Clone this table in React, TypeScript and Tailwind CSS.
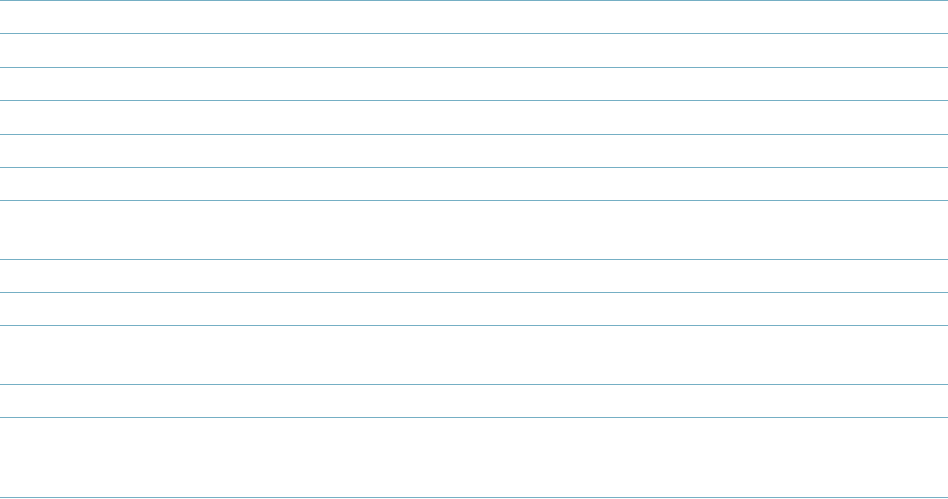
const rows = [
  'h-[33.4px]',
  'h-[33.4px]',
  'h-[33.4px]',
  'h-[33.4px]',
  'h-[33.4px]',
  'h-[33.4px]',
  'h-[58.3px]',
  'h-[33.4px]',
  'h-[33.4px]',
  'h-[58.3px]',
  'h-[33.4px]',
  'h-[80.3px]',
];

export default function App() {
  return (
    <div className="w-[948px] h-[499px] bg-white overflow-hidden" style={{ fontFamily: '"Liberation Sans", Arial, sans-serif' }}>
      <table className="w-full border-collapse table-fixed">
        <colgroup>
          <col className="w-[246px]" />
          <col />
        </colgroup>
        <tbody>
          {rows.map((h, i) => (
            <tr key={i} className={h}>
              <td className="border-y border-[#75afc4] p-0" />
              <td className="border-y border-[#75afc4] p-0" />
            </tr>
          ))}
        </tbody>
      </table>
    </div>
  );
}
